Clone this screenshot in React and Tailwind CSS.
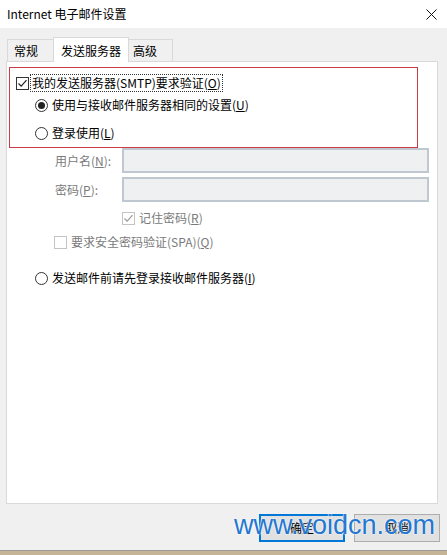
import React from "react";

const font = { fontFamily: '"Noto Sans CJK SC", "Noto Sans", sans-serif' };

function Check({ checked, disabled }) {
  return (
    <span
      className={
        "w-[13px] h-[13px] flex items-center justify-center border bg-white shrink-0 " +
        (disabled ? "border-[#c4c4c4]" : "border-[#333333]")
      }
    >
      {checked && (
        <svg width="11" height="11" viewBox="0 0 11 11">
          <path
            d="M1.5 5.5 L4.2 8.2 L9.5 2.2"
            fill="none"
            stroke={disabled ? "#9a9a9a" : "#222222"}
            strokeWidth="1.2"
          />
        </svg>
      )}
    </span>
  );
}

function Radio({ selected }) {
  return (
    <span className="w-[13px] h-[13px] rounded-full border border-[#333333] bg-white flex items-center justify-center shrink-0">
      {selected && <span className="w-[7px] h-[7px] rounded-full bg-[#222222]" />}
    </span>
  );
}

export default function App() {
  return (
    <div
      className="relative w-[447px] h-[555px] overflow-hidden bg-[#f0f0f0] flex flex-col text-[12px] text-black"
      style={font}
    >
      {/* title bar */}
      <div className="h-[28px] bg-white flex items-center justify-between pl-[7px] pr-[10px] shrink-0">
        <span className="leading-none">Internet 电子邮件设置</span>
        <svg width="11" height="11" viewBox="0 0 11 11">
          <path d="M0.5 0.5 L10.5 10.5 M10.5 0.5 L0.5 10.5" stroke="#111" strokeWidth="1" />
        </svg>
      </div>

      {/* tabs */}
      <div className="flex items-end h-[34px] -mb-px relative z-10 pl-[7px] shrink-0">
        <div className="h-[22px] mb-px w-[46px] border-t border-l border-[#d9d9d9] bg-[#f0f0f0] flex items-center pl-[6px]">
          常规
        </div>
        <div className="h-[25px] w-[76px] border-t border-l border-r border-[#d9d9d9] bg-white flex items-start pt-[4px] pl-[7px]">
          发送服务器
        </div>
        <div className="h-[22px] mb-px w-[44px] border-t border-r border-[#d9d9d9] bg-[#f0f0f0] flex items-center pl-[4px]">
          高级
        </div>
      </div>

      {/* panel */}
      <div className="ml-[6px] w-[432px] h-[443px] border border-[#d9d9d9] bg-white flex flex-col shrink-0">
        {/* highlighted group (red frame) */}
        <div className="ml-[2px] mt-[5px] w-[409px] h-[81px] p-px bg-[#cc3a46]">
          <div className="w-full h-full bg-white flex flex-col pt-[5px]">
            <div className="h-[20px] flex items-center pl-[6px]">
              <Check checked />
              <span className="ml-[1px] h-[18px] flex items-center px-[1px] border border-dotted border-[#333] leading-none">
                我的发送服务器(SMTP)要求验证(<u>O</u>)
              </span>
            </div>
            <div className="h-[20px] mt-[2px] flex items-center pl-[25px]">
              <Radio selected />
              <span className="ml-[4px] leading-none">
                使用与接收邮件服务器相同的设置(<u>U</u>)
              </span>
            </div>
            <div className="h-[20px] mt-[8px] flex items-center pl-[25px]">
              <Radio />
              <span className="ml-[4px] leading-none">
                登录使用(<u>L</u>)
              </span>
            </div>
          </div>
        </div>

        <div className="flex items-center h-[25px] text-[#7a7a7a]">
          <span className="w-[115px] pl-[48px] leading-none">
            用户名(<u>N</u>):
          </span>
          <div className="w-[307px] h-[25px] border-2 border-[#bfc7d0] bg-[#eef0f2]" />
        </div>
        <div className="flex items-center h-[25px] mt-[4px] text-[#7a7a7a]">
          <span className="w-[115px] pl-[48px] leading-none">
            密码(<u>P</u>):
          </span>
          <div className="w-[307px] h-[25px] border-2 border-[#bfc7d0] bg-[#eef0f2]" />
        </div>

        <div className="flex items-center h-[20px] mt-[6px] pl-[115px] text-[#7a7a7a]">
          <Check checked disabled />
          <span className="ml-[4px] leading-none">
            记住密码(<u>R</u>)
          </span>
        </div>
        <div className="flex items-center h-[20px] mt-[4px] pl-[47px] text-[#7a7a7a]">
          <Check disabled />
          <span className="ml-[4px] leading-none">
            要求安全密码验证(SPA)(<u>Q</u>)
          </span>
        </div>

        <div className="flex items-center h-[20px] mt-[16px] pl-[28px]">
          <Radio />
          <span className="ml-[4px] leading-none">
            发送邮件前请先登录接收邮件服务器(<u>I</u>)
          </span>
        </div>
      </div>

      {/* buttons */}
      <div className="flex justify-end gap-[9px] pr-[7px] mt-[10px] shrink-0">
        <button className="w-[86px] h-[28px] border-2 border-[#0078d7] bg-[#e1e1e1] leading-none">
          确定
        </button>
        <button className="w-[86px] h-[28px] border border-[#adadad] bg-[#e1e1e1] leading-none">
          取消
        </button>
      </div>

      <div className="flex-1" />
      <div className="h-[1px] bg-[#9a9a9a] shrink-0" />
      <div className="h-[4px] bg-[#c5b596] shrink-0" />

      {/* watermark */}
      <div
        className="absolute left-[234px] top-[512px] text-[27px] leading-none text-[#2477d0] [text-shadow:0_0_2px_#ffffff,0_0_1px_#ffffff]"
        style={{ fontFamily: '"Liberation Sans", Arial, sans-serif' }}
      >
        www.voidcn.com
      </div>
    </div>
  );
}
